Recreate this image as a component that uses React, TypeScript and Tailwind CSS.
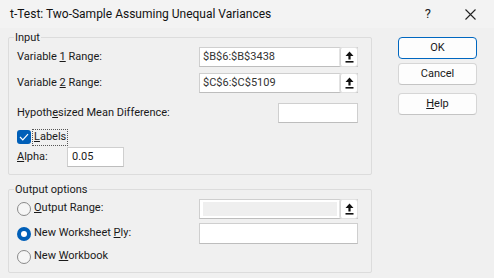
import React from 'react';

function PickIcon() {
    return (
        <svg width="9" height="12" viewBox="0 0 9 12">
            <path d="M4.5 0.5 L8.5 5 L5.6 5 L5.6 8.5 L3.4 8.5 L3.4 5 L0.5 5 Z" fill="#111" />
            <rect x="0.5" y="10" width="8" height="1.6" fill="#111" />
        </svg>
    );
}

function RangeBox({ value, disabled }: { value?: string; disabled?: boolean }) {
    return (
        <div className="w-[159px] h-[20px] flex bg-white border border-[#cfcfcf] border-b-[#bdbdbd]">
            <div className="flex-1 flex items-center px-[3px] py-[2px]">
                {disabled ? (
                    <div className="w-full h-full bg-[#efefef]" />
                ) : (
                    <span className="text-[11px] text-[#333]">{value}</span>
                )}
            </div>
            <div className="w-[17px] h-full flex items-center justify-center bg-white border-l border-[#d6d6d6] rounded-[2px] shadow-[0_0_0_1px_#e2e2e2]">
                <PickIcon />
            </div>
        </div>
    );
}

function Radio({ checked }: { checked?: boolean }) {
    return checked ? (
        <div className="w-[14px] h-[14px] rounded-full bg-[#005fb8] flex items-center justify-center">
            <div className="w-[6px] h-[6px] rounded-full bg-white" />
        </div>
    ) : (
        <div className="w-[14px] h-[14px] rounded-full border border-[#8a8a8a] bg-[#f6f6f6]" />
    );
}

function Button({ children, primary }: { children: React.ReactNode; primary?: boolean }) {
    return (
        <div
            className={`w-[79px] h-[22px] flex items-center justify-center text-[11px] text-[#1a1a1a] bg-[#fdfdfd] rounded-[4px] border ${primary ? 'border-[#0067c0]' : 'border-[#d6d6d6] border-b-[#c4c4c4]'}`}
        >
            {children}
        </div>
    );
}

export default function App() {
    return (
        <div
            className="w-[494px] h-[278px] bg-[#f0f0f0] text-[#1a1a1a] overflow-hidden"
            style={{ fontFamily: 'Roboto, "Noto Sans", sans-serif' }}
        >
            {/* title bar */}
            <div className="h-[28px] flex items-center bg-[#f3f3f3]">
                <span className="ml-[10px] text-[12px] text-[#111]">t-Test: Two-Sample Assuming Unequal Variances</span>
                <span className="ml-auto mr-[34px] text-[13px] text-[#222]">?</span>
                <svg width="11" height="11" viewBox="0 0 11 11" className="mr-[18px]">
                    <path d="M0.5 0.5 L10.5 10.5 M10.5 0.5 L0.5 10.5" stroke="#222" strokeWidth="1.1" />
                </svg>
            </div>

            <div className="flex pl-[8px] pt-[9px]">
                <div className="w-[364px] flex flex-col">
                    {/* Input group */}
                    <div className="relative h-[138px] border border-[#dcdcdc] rounded-[2px] pt-[9px] pl-[8px] pr-[13px] flex flex-col text-[11px]">
                        <span className="absolute top-[-8px] left-[5px] px-[1px] bg-[#f0f0f0] leading-[16px]">Input</span>
                        <div className="h-[20px] flex items-center justify-between">
                            <span>Variable <u>1</u> Range:</span>
                            <RangeBox value="$B$6:$B$3438" />
                        </div>
                        <div className="h-[20px] mt-[6px] flex items-center justify-between">
                            <span>Variable <u>2</u> Range:</span>
                            <RangeBox value="$C$6:$C$5109" />
                        </div>
                        <div className="h-[20px] mt-[10px] flex items-center justify-between">
                            <span>Hypoth<u>e</u>sized Mean Difference:</span>
                            <div className="w-[80px] h-[20px] bg-white border border-[#cfcfcf] border-b-[#bdbdbd]" />
                        </div>
                        <div className="h-[16px] mt-[6px] flex items-center">
                            <div className="w-[14px] h-[14px] rounded-[3px] bg-[#005fb8] flex items-center justify-center">
                                <svg width="10" height="8" viewBox="0 0 10 8">
                                    <path d="M1 4 L3.8 6.8 L9 1.2" stroke="white" strokeWidth="1.2" fill="none" />
                                </svg>
                            </div>
                            <span className="ml-[1px] px-[1px] h-[17px] flex items-center border border-dotted border-[#555]">
                                <span><u>L</u>abels</span>
                            </span>
                        </div>
                        <div className="h-[20px] mt-[2px] flex items-center">
                            <span className="w-[50px]"><u>A</u>lpha:</span>
                            <div className="w-[57px] h-[20px] bg-white border border-[#cfcfcf] border-b-[#bdbdbd] flex items-center px-[4px]">
                                <span>0.05</span>
                            </div>
                        </div>
                    </div>

                    {/* Output group */}
                    <div className="relative mt-[14px] h-[84px] border border-[#dcdcdc] rounded-[2px] pt-[8px] pl-[8px] pr-[13px] flex flex-col text-[11px]">
                        <span className="absolute top-[-8px] left-[5px] px-[1px] bg-[#f0f0f0] leading-[16px]">Output options</span>
                        <div className="h-[21px] flex items-center justify-between">
                            <div className="flex items-center gap-[3px]">
                                <Radio />
                                <span><u>O</u>utput Range:</span>
                            </div>
                            <RangeBox disabled />
                        </div>
                        <div className="h-[21px] mt-[4px] flex items-center justify-between">
                            <div className="flex items-center gap-[3px]">
                                <Radio checked />
                                <span>New Worksheet <u>P</u>ly:</span>
                            </div>
                            <div className="w-[159px] h-[21px] bg-white border border-[#cfcfcf] border-b-[#bdbdbd]" />
                        </div>
                        <div className="h-[21px] mt-[2px] flex items-center gap-[3px]">
                            <Radio />
                            <span>New <u>W</u>orkbook</span>
                        </div>
                    </div>
                </div>

                {/* buttons */}
                <div className="ml-[26px] flex flex-col">
                    <Button primary>OK</Button>
                    <div className="mt-[4px]">
                        <Button>Cancel</Button>
                    </div>
                    <div className="mt-[8px]">
                        <Button><span><u>H</u>elp</span></Button>
                    </div>
                </div>
            </div>
        </div>
    );
}
